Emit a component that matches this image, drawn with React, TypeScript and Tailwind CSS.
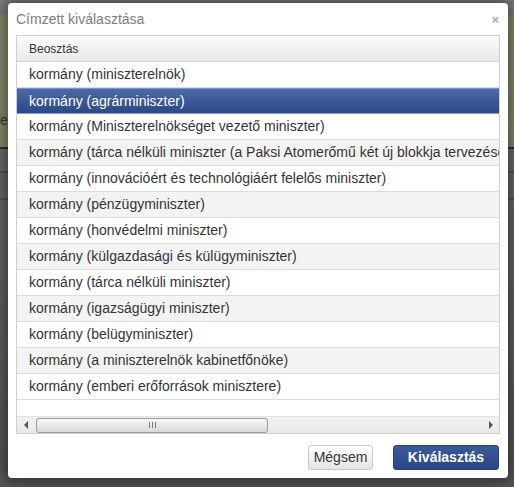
import React from "react";

const rows = [
  "kormány (miniszterelnök)",
  "kormány (agrárminiszter)",
  "kormány (Miniszterelnökséget vezető miniszter)",
  "kormány (tárca nélküli miniszter (a Paksi Atomerőmű két új blokkja tervezéséért, megépítéséért és üzembe helyezéséért felelős))",
  "kormány (innovációért és technológiáért felelős miniszter)",
  "kormány (pénzügyminiszter)",
  "kormány (honvédelmi miniszter)",
  "kormány (külgazdasági és külügyminiszter)",
  "kormány (tárca nélküli miniszter)",
  "kormány (igazságügyi miniszter)",
  "kormány (belügyminiszter)",
  "kormány (a miniszterelnök kabinetfőnöke)",
  "kormány (emberi erőforrások minisztere)",
];

export default function App() {
  return (
    <div
      className="relative w-[514px] h-[487px] overflow-hidden bg-[#5e5e5e]"
      style={{ fontFamily: '"Liberation Sans", Arial, sans-serif' }}
    >
      {/* dimmed page behind */}
      <div className="flex flex-col h-full">
        <div className="h-[15px] bg-[#7d7f80]" />
        <div className="h-[132px] bg-[#8b8a70] flex items-end pb-[16px]">
          <span className="text-[14px] text-[#3a3a30]">ez</span>
        </div>
        <div className="h-[2px] bg-[#2e2e2e]" />
        <div className="h-[22px] bg-[#6e6e6e]" />
        <div className="h-[2px] bg-[#555]" />
        <div className="h-[25px] bg-[#6a6a6a]" />
        <div className="h-[2px] bg-[#555]" />
        <div className="flex-1 bg-gradient-to-b from-[#6a6a6a] to-[#565656]" />
      </div>

      {/* dialog */}
      <div className="absolute left-[8px] top-[3px] w-[500px] h-[475px] bg-white rounded-[4px] shadow-[0_0_14px_4px_rgba(0,0,0,0.45)] flex flex-col">
        <div className="h-[32px] flex items-center justify-between pl-[8px] pr-[9px]">
          <span className="text-[14px] text-[#7c7c7c]">Címzett kiválasztása</span>
          <span className="text-[13px] text-[#aaa] font-bold leading-none">×</span>
        </div>

        <div className="mx-[8px] h-[399px] border border-[#cfcfcf] flex flex-col overflow-hidden">
          <div className="h-[26px] shrink-0 flex items-center pl-[12px] border-b border-[#d3d3d3] bg-gradient-to-b from-[#fafafa] to-[#e9e9e9] text-[12px] text-[#333]">
            Beosztás
          </div>
          <div className="flex flex-col">
            {rows.map((r, i) => {
              const sel = i === 1;
              return (
                <div
                  key={i}
                  className={
                    sel
                      ? "h-[26px] shrink-0 flex items-center pl-[12px] whitespace-nowrap text-[14px] text-white bg-gradient-to-b from-[#4c6aa6] to-[#2c4886] border-t border-[#7b93c4] border-b border-b-[#8aa0cc]"
                      : i % 2 === 1
                      ? "h-[26px] shrink-0 flex items-center pl-[12px] whitespace-nowrap text-[14px] text-[#333] bg-[#f3f3f3] border-b border-[#dcdcdc]"
                      : "h-[26px] shrink-0 flex items-center pl-[12px] whitespace-nowrap text-[14px] text-[#333] bg-white border-b border-[#dcdcdc]"
                  }
                >
                  {r}
                </div>
              );
            })}
          </div>
          <div className="flex-1 bg-white" />
          {/* horizontal scrollbar */}
          <div className="h-[17px] shrink-0 flex items-center bg-gradient-to-b from-[#f2f2f2] to-[#e8e8e8] border-t border-[#e0e0e0]">
            <div className="w-[17px] h-full flex items-center justify-center">
              <div className="w-0 h-0 border-y-[4px] border-y-transparent border-r-[4px] border-r-[#555]" />
            </div>
            <div className="ml-[2px] w-[232px] h-[15px] rounded-[3px] border border-[#9a9a9a] bg-gradient-to-b from-[#f7f7f7] to-[#d9d9d9] flex items-center justify-center gap-[2px]">
              <div className="w-px h-[6px] bg-[#777]" />
              <div className="w-px h-[6px] bg-[#777]" />
              <div className="w-px h-[6px] bg-[#777]" />
            </div>
            <div className="flex-1" />
            <div className="w-[17px] h-full flex items-center justify-center">
              <div className="w-0 h-0 border-y-[4px] border-y-transparent border-l-[4px] border-l-[#555]" />
            </div>
          </div>
        </div>

        <div className="flex justify-end items-center gap-[20px] pr-[9px] mt-[11px]">
          <button className="h-[25px] w-[65px] rounded-[3px] border border-[#c8c8c8] bg-gradient-to-b from-white to-[#e4e4e4] text-[14px] text-[#333]">
            Mégsem
          </button>
          <button className="h-[25px] w-[106px] rounded-[3px] border border-[#24407a] bg-gradient-to-b from-[#3b5a9a] to-[#2a4684] text-[14px] font-bold text-white">
            Kiválasztás
          </button>
        </div>
      </div>
    </div>
  );
}
